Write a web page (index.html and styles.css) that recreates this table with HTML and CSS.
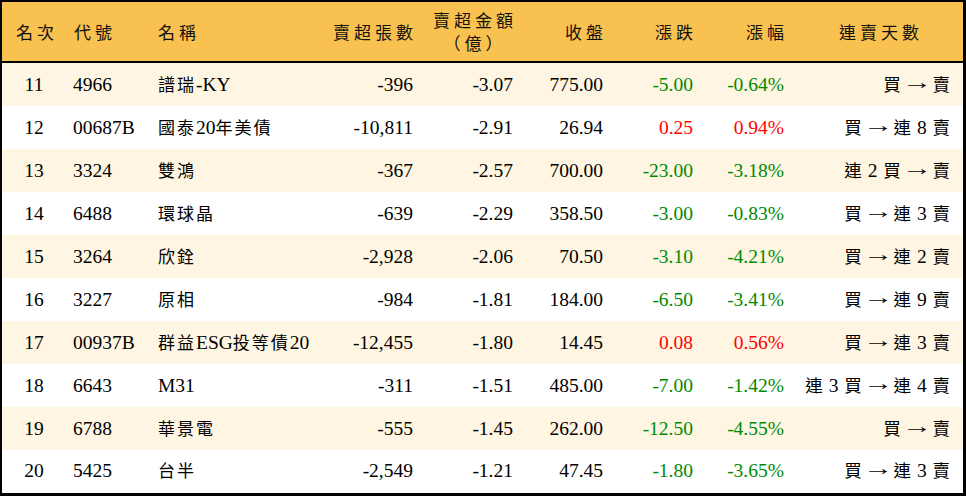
FILE: index.html
```html
<!DOCTYPE html>
<html lang="zh-Hant">
<head>
<meta charset="utf-8">
<title>賣超排行</title>
<link rel="stylesheet" href="styles.css">
</head>
<body>
<div class="board">
  <div class="row head">
    <div class="c c1"><span class="h">名次</span></div>
    <div class="c c2"><span class="h">代號</span></div>
    <div class="c c3"><span class="h">名稱</span></div>
    <div class="c c4 r"><span class="h">賣超張數</span></div>
    <div class="c c5 r"><span class="h two"><span class="ln">賣超金額</span><span class="ln">（億）</span></span></div>
    <div class="c c6 r"><span class="h">收盤</span></div>
    <div class="c c7 r"><span class="h">漲跌</span></div>
    <div class="c c8 r"><span class="h">漲幅</span></div>
    <div class="c c9 ctr"><span class="h">連賣天數</span></div>
  </div>

  <div class="row alt">
    <div class="c c1">11</div><div class="c c2">4966</div><div class="c c3"><span><span class="cj">譜瑞</span>-KY</span></div>
    <div class="c c4 r">-396</div><div class="c c5 r">-3.07</div><div class="c c6 r">775.00</div>
    <div class="c c7 r dn">-5.00</div><div class="c c8 r dn">-0.64%</div>
    <div class="c c9 r"><span class="seq"><span class="cj">買</span> <span class="arr">→</span> <span class="cj">賣</span></span></div>
  </div>
  <div class="row">
    <div class="c c1">12</div><div class="c c2">00687B</div><div class="c c3"><span><span class="cj">國泰</span>20<span class="cj">年美債</span></span></div>
    <div class="c c4 r">-10,811</div><div class="c c5 r">-2.91</div><div class="c c6 r">26.94</div>
    <div class="c c7 r up">0.25</div><div class="c c8 r up">0.94%</div>
    <div class="c c9 r"><span class="seq"><span class="cj">買</span> <span class="arr">→</span> <span class="cj">連</span> 8 <span class="cj">賣</span></span></div>
  </div>
  <div class="row alt">
    <div class="c c1">13</div><div class="c c2">3324</div><div class="c c3"><span><span class="cj">雙鴻</span></span></div>
    <div class="c c4 r">-367</div><div class="c c5 r">-2.57</div><div class="c c6 r">700.00</div>
    <div class="c c7 r dn">-23.00</div><div class="c c8 r dn">-3.18%</div>
    <div class="c c9 r"><span class="seq"><span class="cj">連</span> 2 <span class="cj">買</span> <span class="arr">→</span> <span class="cj">賣</span></span></div>
  </div>
  <div class="row">
    <div class="c c1">14</div><div class="c c2">6488</div><div class="c c3"><span><span class="cj">環球晶</span></span></div>
    <div class="c c4 r">-639</div><div class="c c5 r">-2.29</div><div class="c c6 r">358.50</div>
    <div class="c c7 r dn">-3.00</div><div class="c c8 r dn">-0.83%</div>
    <div class="c c9 r"><span class="seq"><span class="cj">買</span> <span class="arr">→</span> <span class="cj">連</span> 3 <span class="cj">賣</span></span></div>
  </div>
  <div class="row alt">
    <div class="c c1">15</div><div class="c c2">3264</div><div class="c c3"><span><span class="cj">欣銓</span></span></div>
    <div class="c c4 r">-2,928</div><div class="c c5 r">-2.06</div><div class="c c6 r">70.50</div>
    <div class="c c7 r dn">-3.10</div><div class="c c8 r dn">-4.21%</div>
    <div class="c c9 r"><span class="seq"><span class="cj">買</span> <span class="arr">→</span> <span class="cj">連</span> 2 <span class="cj">賣</span></span></div>
  </div>
  <div class="row">
    <div class="c c1">16</div><div class="c c2">3227</div><div class="c c3"><span><span class="cj">原相</span></span></div>
    <div class="c c4 r">-984</div><div class="c c5 r">-1.81</div><div class="c c6 r">184.00</div>
    <div class="c c7 r dn">-6.50</div><div class="c c8 r dn">-3.41%</div>
    <div class="c c9 r"><span class="seq"><span class="cj">買</span> <span class="arr">→</span> <span class="cj">連</span> 9 <span class="cj">賣</span></span></div>
  </div>
  <div class="row alt">
    <div class="c c1">17</div><div class="c c2">00937B</div><div class="c c3"><span><span class="cj">群益</span>ESG<span class="cj">投等債</span>20</span></div>
    <div class="c c4 r">-12,455</div><div class="c c5 r">-1.80</div><div class="c c6 r">14.45</div>
    <div class="c c7 r up">0.08</div><div class="c c8 r up">0.56%</div>
    <div class="c c9 r"><span class="seq"><span class="cj">買</span> <span class="arr">→</span> <span class="cj">連</span> 3 <span class="cj">賣</span></span></div>
  </div>
  <div class="row">
    <div class="c c1">18</div><div class="c c2">6643</div><div class="c c3">M31</div>
    <div class="c c4 r">-311</div><div class="c c5 r">-1.51</div><div class="c c6 r">485.00</div>
    <div class="c c7 r dn">-7.00</div><div class="c c8 r dn">-1.42%</div>
    <div class="c c9 r"><span class="seq"><span class="cj">連</span> 3 <span class="cj">買</span> <span class="arr">→</span> <span class="cj">連</span> 4 <span class="cj">賣</span></span></div>
  </div>
  <div class="row alt">
    <div class="c c1">19</div><div class="c c2">6788</div><div class="c c3"><span><span class="cj">華景電</span></span></div>
    <div class="c c4 r">-555</div><div class="c c5 r">-1.45</div><div class="c c6 r">262.00</div>
    <div class="c c7 r dn">-12.50</div><div class="c c8 r dn">-4.55%</div>
    <div class="c c9 r"><span class="seq"><span class="cj">買</span> <span class="arr">→</span> <span class="cj">賣</span></span></div>
  </div>
  <div class="row last">
    <div class="c c1">20</div><div class="c c2">5425</div><div class="c c3"><span><span class="cj">台半</span></span></div>
    <div class="c c4 r">-2,549</div><div class="c c5 r">-1.21</div><div class="c c6 r">47.45</div>
    <div class="c c7 r dn">-1.80</div><div class="c c8 r dn">-3.65%</div>
    <div class="c c9 r"><span class="seq"><span class="cj">買</span> <span class="arr">→</span> <span class="cj">連</span> 3 <span class="cj">賣</span></span></div>
  </div>
</div>
</body>
</html>
```

FILE: styles.css
```css
* { box-sizing: border-box; }
html, body { margin: 0; padding: 0; background: #ffffff; }
body {
  font-family: "Liberation Serif", "Noto Sans CJK TC", serif;
  font-size: 19.5px;
  color: #000000;
}
.board {
  width: 966px;
  height: 496px;
  border-top: 2px solid #000;
  border-left: 2px solid #000;
  border-right: 3px solid #000;
  border-bottom: 3px solid #000;
  overflow: hidden;
}
.row {
  display: grid;
  grid-template-columns: 64px 84px 170px 104px 100px 90px 90px 91px 168px;
  height: 43px;
  background: #ffffff;
}
.row.alt { background: #fef6e2; }
.row.last { height: 42px; }
.row.head {
  height: 61px;
  background: #f9c14f;
  border-bottom: 2px solid #000;
}
.c {
  display: flex;
  align-items: center;
  white-space: nowrap;
  line-height: 1;
}
.c1 { justify-content: center; }
.c2 { padding-left: 7px; }
.c3 { padding-left: 8px; }
.r { justify-content: flex-end; padding-right: 11px; }
.c9.r { padding-right: 13px; }
.seq { word-spacing: 1px; }
.arr {
  display: inline-block;
  width: 20px;
  text-align: center;
  font-family: "Liberation Serif", serif;
  font-size: 19.5px;
  transform: translateY(-2px) scaleX(1.55);
}
.ctr { justify-content: center; }
.head .c2 { padding-left: 8px; }
.head .c1 { padding-left: 2px; }
.head .c9 { padding-left: 0; }
.h {
  display: inline-block;
  font-family: "Noto Sans CJK TC", sans-serif;
  font-size: 17px;
  letter-spacing: 4px;
  margin-right: -4px;
  line-height: 22px;
  color: #111;
}
.h.two {
  display: flex;
  flex-direction: column;
  align-items: center;
  margin-top: -1px;
}
.ln { display: block; height: 23px; line-height: 23px; overflow: visible; }
.cj {
  font-family: "Noto Sans CJK TC", sans-serif;
  font-size: 17.5px;
  letter-spacing: 2px;
}
.c3 .cj { font-size: 17px; }
.c9 .cj { letter-spacing: 0; }
.dn { color: #008a00; }
.up { color: #ff0000; }
```
